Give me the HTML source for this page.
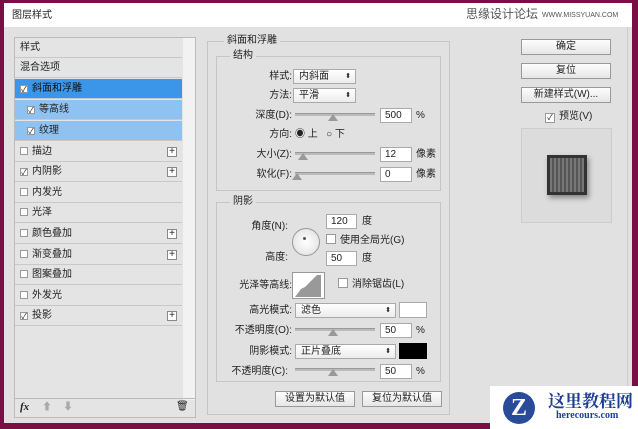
<!DOCTYPE html>
<html><head><meta charset="utf-8"><style>
*{margin:0;padding:0;box-sizing:border-box}
body{width:638px;height:429px;background:#7a0f45;position:relative;overflow:hidden;font-family:"Liberation Sans","Noto Sans CJK SC",sans-serif;font-size:10px;color:#222;line-height:14px}
.a{position:absolute}
.win{left:4px;top:3px;width:628px;height:420px;background:#e1e1e1}
.title{left:4px;top:3px;width:628px;height:24px;background:#fff}
.row{position:absolute;left:15px;width:167px;height:20px;border-bottom:1px solid #c8c8c8;line-height:20px;padding-left:5px}
.cb{display:inline-block;width:8px;height:8px;border:1px solid #999;background:#fff;margin-right:4px;vertical-align:-1px;font-size:8px;line-height:7px;text-align:center}
.plus{position:absolute;right:5px;top:5px;width:10px;height:10px;border:1px solid #888;background:#fff;font-size:10px;line-height:8px;text-align:center}
.btn{position:absolute;border:1px solid #999;background:linear-gradient(#fdfdfd,#e6e6e6);text-align:center;line-height:14px;font-size:10px}
.inp{position:absolute;background:#fff;border:1px solid #aaa;height:15px;line-height:13px;padding-left:4px}
.sel{position:absolute;background:linear-gradient(#fff,#ececec);border:1px solid #aaa;height:15px;line-height:13px;padding-left:5px}
.sel:after{content:"⬍";position:absolute;right:4px;top:0;font-size:7px}
.lbl{position:absolute;text-align:right;width:80px;white-space:nowrap;line-height:15px}
.sl{position:absolute;height:3px;background:#bbb;border-top:1px solid #999}
.th{position:absolute;width:0;height:0;border-left:5px solid transparent;border-right:5px solid transparent;border-bottom:7px solid #999}
.grp{position:absolute;border:1px solid #c6c6c6}
</style></head><body>
<div class="a win"></div>
<div class="a title"></div>
<div class="a" style="left:12px;top:9px">图层样式</div>
<div class="a" style="left:466px;top:7px;font-size:12px;color:#555">思缘设计论坛</div>
<div class="a" style="left:542px;top:9px;font-size:7px;color:#555">WWW.MISSYUAN.COM</div>

<div class="a" style="left:14px;top:37px;width:182px;height:381px;border:1px solid #bbb;background:#e4e4e4"></div>
<div class="a" style="left:183px;top:38px;width:12px;height:362px;background:#f2f2f2"></div>
<div class="row" style="top:38px">样式</div>
<div class="row" style="top:58px">混合选项</div>
<div class="row" style="top:79px;background:#3b95e8;color:#111"><span class="cb">✓</span>斜面和浮雕</div>
<div class="row" style="top:100px;background:#8fc2f0;padding-left:12px"><span class="cb">✓</span>等高线</div>
<div class="row" style="top:121px;background:#8fc2f0;padding-left:12px"><span class="cb">✓</span>纹理</div>
<div class="row" style="top:142px"><span class="cb"></span>描边<span class="plus">+</span></div>
<div class="row" style="top:162px"><span class="cb">✓</span>内阴影<span class="plus">+</span></div>
<div class="row" style="top:183px"><span class="cb"></span>内发光</div>
<div class="row" style="top:203px"><span class="cb"></span>光泽</div>
<div class="row" style="top:224px"><span class="cb"></span>颜色叠加<span class="plus">+</span></div>
<div class="row" style="top:245px"><span class="cb"></span>渐变叠加<span class="plus">+</span></div>
<div class="row" style="top:265px"><span class="cb"></span>图案叠加</div>
<div class="row" style="top:286px"><span class="cb"></span>外发光</div>
<div class="row" style="top:306px"><span class="cb">✓</span>投影<span class="plus">+</span></div>
<div class="a" style="left:14px;top:398px;width:182px;height:1px;background:#bbb"></div>
<div class="a" style="left:20px;top:400px;font-style:italic;font-family:'Liberation Serif',serif;font-size:11px;font-weight:bold">fx</div>
<div class="a" style="left:42px;top:401px;color:#aaa">⬆</div><div class="a" style="left:63px;top:401px;color:#aaa">⬇</div>
<div class="a" style="left:176px;top:400px">🗑</div>

<div class="grp" style="left:207px;top:41px;width:243px;height:374px"></div>
<div class="a" style="left:224px;top:34px;background:#e1e1e1;padding:0 3px">斜面和浮雕</div>
<div class="grp" style="left:216px;top:56px;width:225px;height:135px"></div>
<div class="a" style="left:230px;top:49px;background:#e1e1e1;padding:0 3px">结构</div>
<div class="lbl" style="left:212px;top:69px">样式:</div><div class="sel" style="left:293px;top:69px;width:63px">内斜面</div>
<div class="lbl" style="left:212px;top:88px">方法:</div><div class="sel" style="left:293px;top:88px;width:63px">平滑</div>
<div class="lbl" style="left:212px;top:108px">深度(D):</div><div class="sl" style="left:295px;top:113px;width:80px"></div><div class="th" style="left:328px;top:114px"></div><div class="inp" style="left:380px;top:108px;width:32px">500</div><div class="a" style="left:416px;top:109px">%</div>
<div class="lbl" style="left:212px;top:127px">方向:</div><div class="a" style="left:295px;top:128px">◉ 上 &nbsp;&nbsp;○ 下</div>
<div class="lbl" style="left:212px;top:147px">大小(Z):</div><div class="sl" style="left:295px;top:152px;width:80px"></div><div class="th" style="left:298px;top:153px"></div><div class="inp" style="left:380px;top:147px;width:32px">12</div><div class="a" style="left:416px;top:148px">像素</div>
<div class="lbl" style="left:212px;top:167px">软化(F):</div><div class="sl" style="left:295px;top:172px;width:80px"></div><div class="th" style="left:292px;top:173px"></div><div class="inp" style="left:380px;top:167px;width:32px">0</div><div class="a" style="left:416px;top:168px">像素</div>

<div class="grp" style="left:216px;top:202px;width:225px;height:180px"></div>
<div class="a" style="left:230px;top:195px;background:#e1e1e1;padding:0 3px">阴影</div>
<div class="lbl" style="left:208px;top:219px">角度(N):</div><div class="inp" style="left:326px;top:214px;width:31px">120</div><div class="a" style="left:362px;top:215px">度</div>
<div class="a" style="left:292px;top:228px;width:28px;height:28px;border-radius:50%;border:1px solid #999;background:radial-gradient(#fff,#ddd)"></div><div class="a" style="left:303px;top:237px;width:3px;height:3px;background:#555;border-radius:50%"></div>
<div class="a" style="left:326px;top:234px"><span class="cb" style="width:10px;height:10px"></span>使用全局光(G)</div>
<div class="lbl" style="left:208px;top:250px">高度:</div><div class="inp" style="left:326px;top:251px;width:31px">50</div><div class="a" style="left:362px;top:252px">度</div>
<div class="lbl" style="left:212px;top:278px">光泽等高线:</div>
<div class="a" style="left:292px;top:272px;width:33px;height:27px;border:1px solid #999;background:#fff"><svg width="31" height="25"><path d="M2 24 L8 16 L12 14 L16 10 L20 6 L24 2 L28 2 L28 24Z" fill="#999"/></svg></div>
<div class="a" style="left:338px;top:278px"><span class="cb" style="width:10px;height:10px"></span>消除锯齿(L)</div>
<div class="lbl" style="left:212px;top:303px">高光模式:</div><div class="sel" style="left:295px;top:303px;width:101px">滤色</div><div class="a" style="left:399px;top:302px;width:28px;height:16px;background:#fff;border:1px solid #aaa"></div>
<div class="lbl" style="left:212px;top:323px">不透明度(O):</div><div class="sl" style="left:295px;top:328px;width:80px"></div><div class="th" style="left:328px;top:329px"></div><div class="inp" style="left:380px;top:323px;width:32px">50</div><div class="a" style="left:416px;top:324px">%</div>
<div class="lbl" style="left:212px;top:344px">阴影模式:</div><div class="sel" style="left:295px;top:344px;width:101px">正片叠底</div><div class="a" style="left:399px;top:343px;width:28px;height:16px;background:#000"></div>
<div class="lbl" style="left:208px;top:364px">不透明度(C):</div><div class="sl" style="left:295px;top:368px;width:80px"></div><div class="th" style="left:328px;top:369px"></div><div class="inp" style="left:380px;top:364px;width:32px">50</div><div class="a" style="left:416px;top:365px">%</div>
<div class="btn" style="left:275px;top:391px;width:80px">设置为默认值</div>
<div class="btn" style="left:362px;top:391px;width:80px">复位为默认值</div>

<div class="btn" style="left:521px;top:39px;width:90px">确定</div>
<div class="btn" style="left:521px;top:63px;width:90px">复位</div>
<div class="btn" style="left:521px;top:87px;width:90px">新建样式(W)...</div>
<div class="a" style="left:545px;top:110px"><span class="cb" style="width:10px;height:10px">✓</span>预览(V)</div>
<div class="a" style="left:521px;top:128px;width:91px;height:95px;border:1px solid #ccc;background:#dcdcdc"></div>
<div class="a" style="left:547px;top:155px;width:40px;height:40px;background:repeating-linear-gradient(90deg,#777 0 2px,#555 2px 4px),#555;border:3px solid #333;box-shadow:2px 3px 5px #888"></div>
<div class="a" style="left:627px;top:27px;width:1px;height:396px;background:#ccc"></div>

<div class="a" style="left:490px;top:386px;width:148px;height:43px;background:#fff"></div>
<div class="a" style="left:503px;top:392px;width:32px;height:32px;border-radius:50%;background:#2a4b9a;color:#fff;font:bold 24px 'Liberation Serif',serif;text-align:center;line-height:32px">Z</div>
<div class="a" style="left:548px;top:389px;font:bold 17px 'Noto Serif CJK SC',serif;color:#1d3f8f;line-height:22px">这里教程网</div>
<div class="a" style="left:556px;top:410px;font:bold 10px 'Liberation Serif',serif;color:#1d3f8f">herecours.com</div>
</body></html>
